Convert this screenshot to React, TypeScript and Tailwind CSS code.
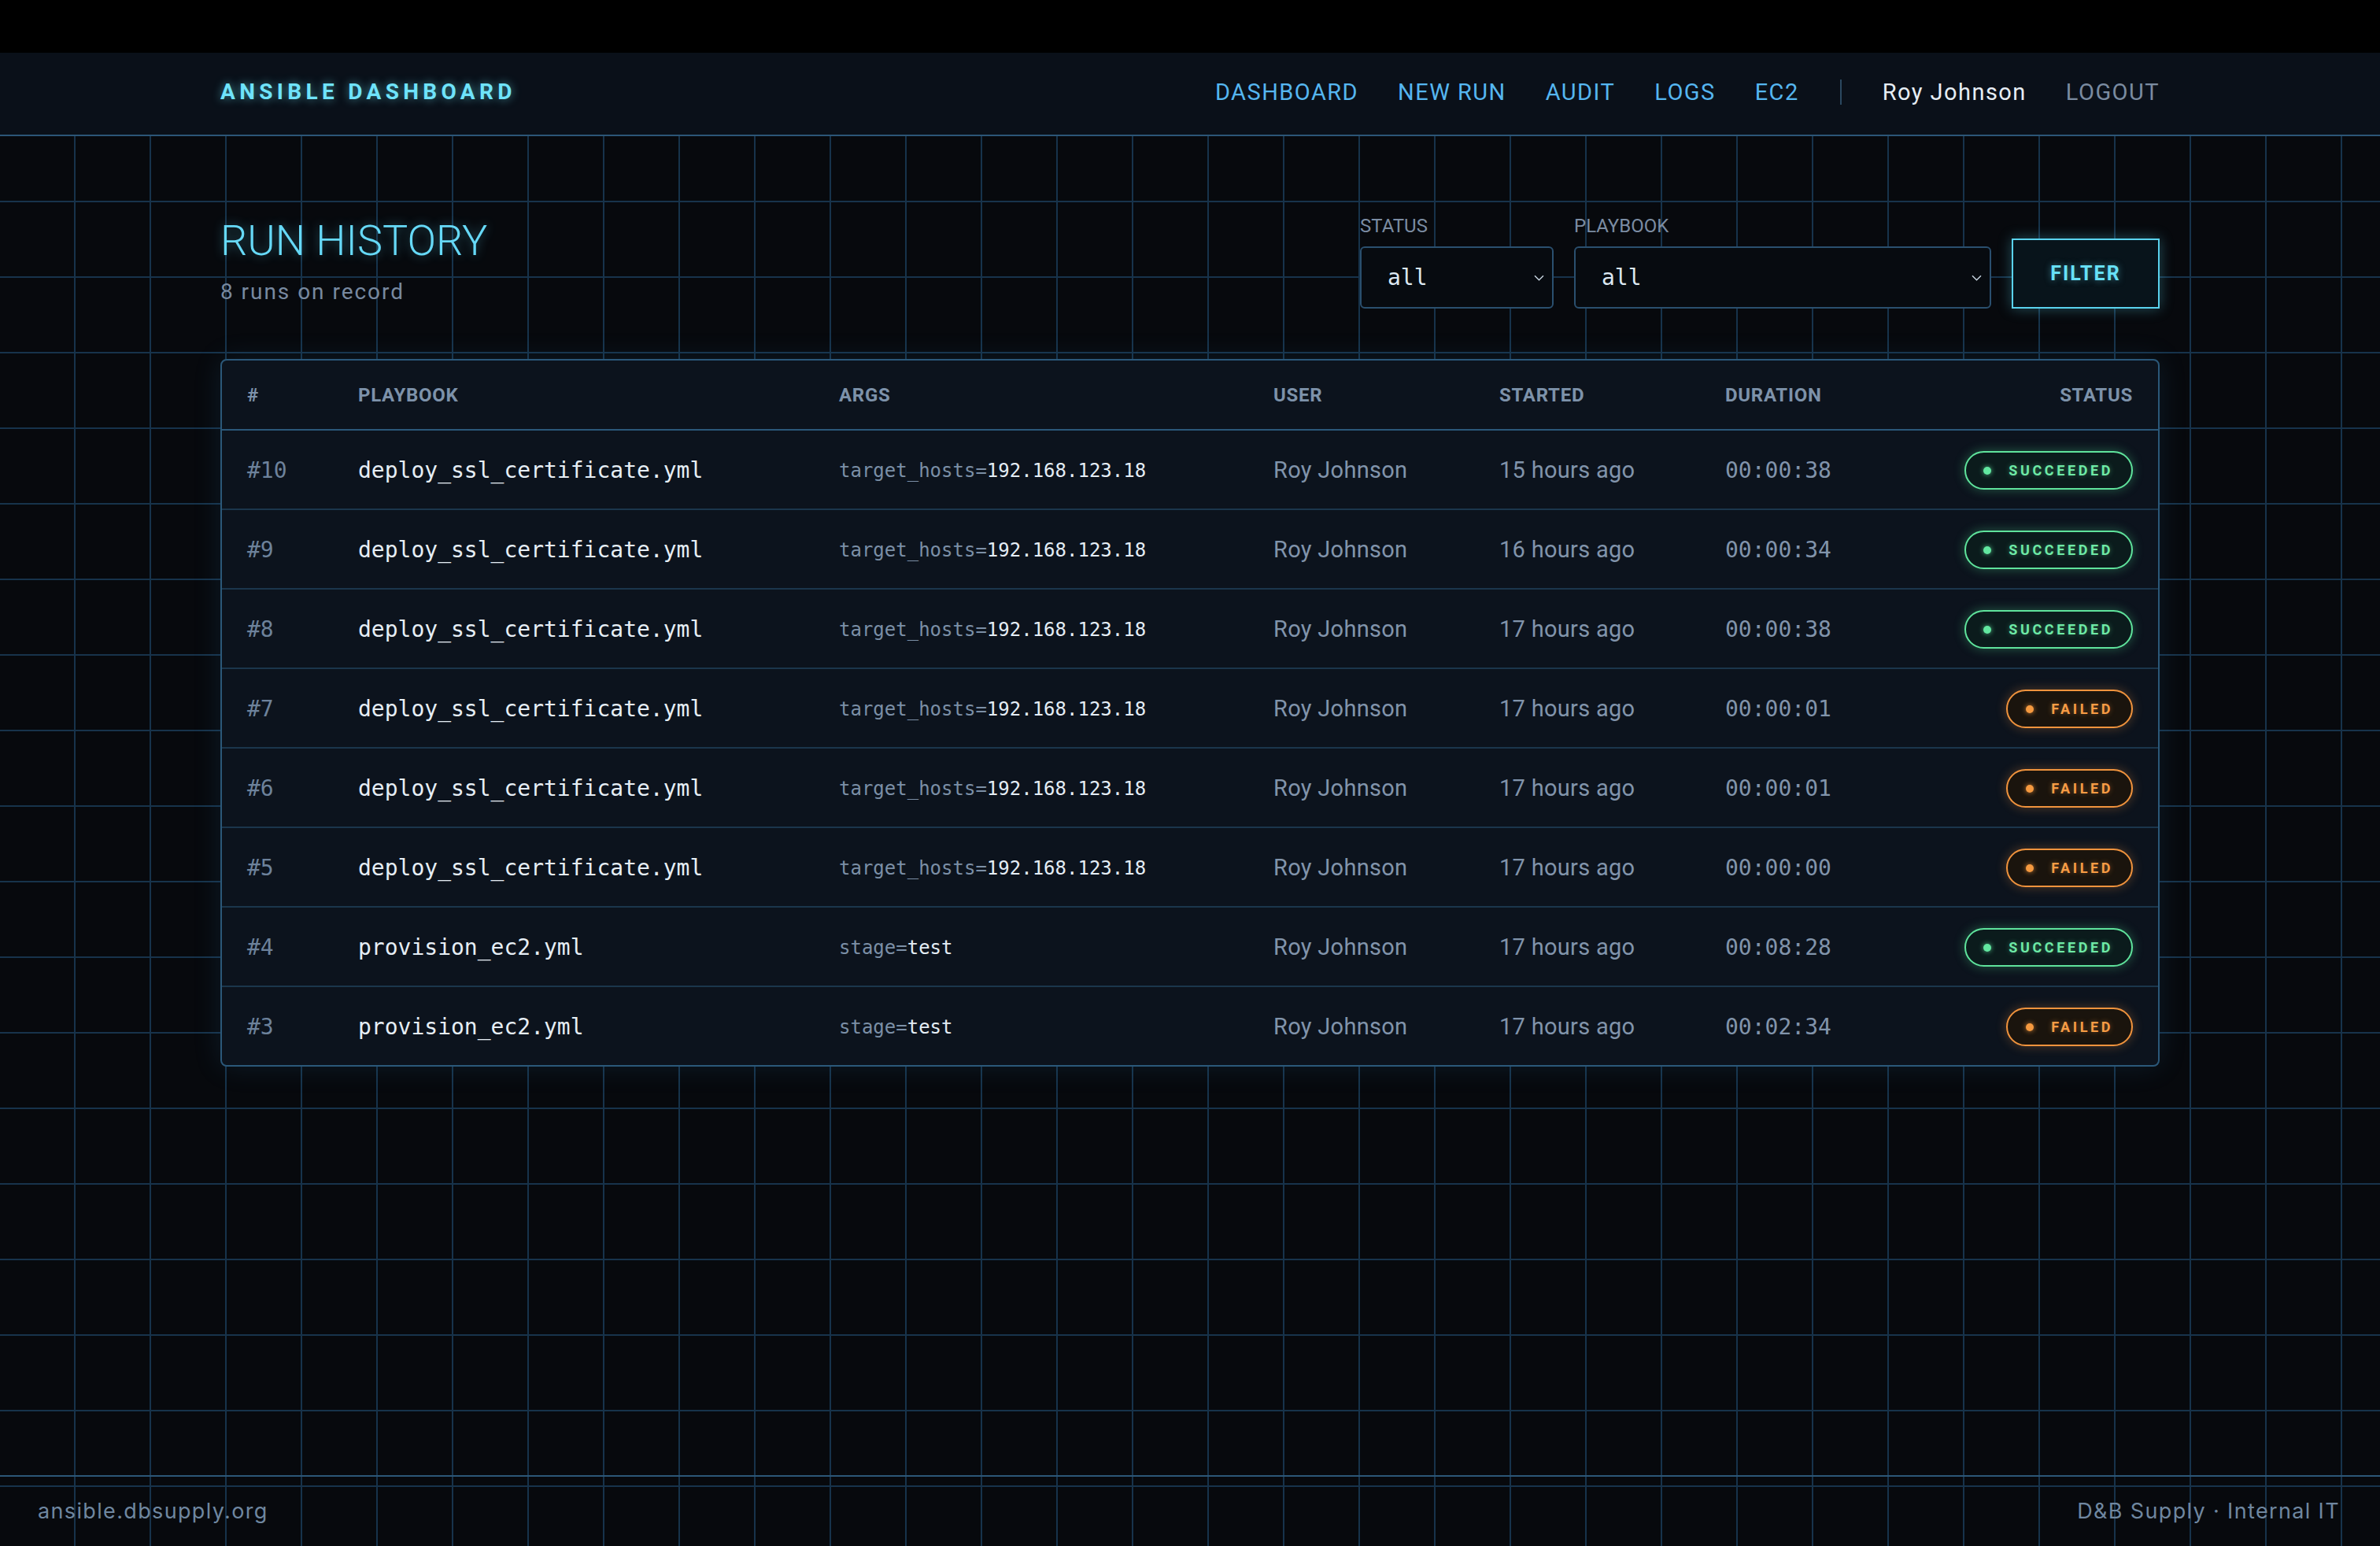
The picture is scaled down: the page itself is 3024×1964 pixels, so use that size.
import React from 'react';

type Run = {
  id: number;
  playbook: string;
  argKey: string;
  argValue: string;
  user: string;
  started: string;
  duration: string;
  status: 'SUCCEEDED' | 'FAILED';
};

const runs: Run[] = [
  { id: 10, playbook: 'deploy_ssl_certificate.yml', argKey: 'target_hosts=', argValue: '192.168.123.18', user: 'Roy Johnson', started: '15 hours ago', duration: '00:00:38', status: 'SUCCEEDED' },
  { id: 9, playbook: 'deploy_ssl_certificate.yml', argKey: 'target_hosts=', argValue: '192.168.123.18', user: 'Roy Johnson', started: '16 hours ago', duration: '00:00:34', status: 'SUCCEEDED' },
  { id: 8, playbook: 'deploy_ssl_certificate.yml', argKey: 'target_hosts=', argValue: '192.168.123.18', user: 'Roy Johnson', started: '17 hours ago', duration: '00:00:38', status: 'SUCCEEDED' },
  { id: 7, playbook: 'deploy_ssl_certificate.yml', argKey: 'target_hosts=', argValue: '192.168.123.18', user: 'Roy Johnson', started: '17 hours ago', duration: '00:00:01', status: 'FAILED' },
  { id: 6, playbook: 'deploy_ssl_certificate.yml', argKey: 'target_hosts=', argValue: '192.168.123.18', user: 'Roy Johnson', started: '17 hours ago', duration: '00:00:01', status: 'FAILED' },
  { id: 5, playbook: 'deploy_ssl_certificate.yml', argKey: 'target_hosts=', argValue: '192.168.123.18', user: 'Roy Johnson', started: '17 hours ago', duration: '00:00:00', status: 'FAILED' },
  { id: 4, playbook: 'provision_ec2.yml', argKey: 'stage=', argValue: 'test', user: 'Roy Johnson', started: '17 hours ago', duration: '00:08:28', status: 'SUCCEEDED' },
  { id: 3, playbook: 'provision_ec2.yml', argKey: 'stage=', argValue: 'test', user: 'Roy Johnson', started: '17 hours ago', duration: '00:02:34', status: 'FAILED' },
];

const navLinks = ['DASHBOARD', 'NEW RUN', 'AUDIT', 'LOGS', 'EC2'];

const cols = 'grid grid-cols-[141px_611px_552px_287px_287px_280px_1fr] items-center px-8';

function Chevron() {
  return (
    <svg width="13" height="8" viewBox="0 0 13 8" fill="none" className="pointer-events-none absolute right-[12px] top-1/2 -translate-y-1/2">
      <polyline points="1,1.2 6.5,6.8 12,1.2" stroke="#c9d6e2" strokeWidth="1.4" />
    </svg>
  );
}

function StatusBadge({ status }: { status: Run['status'] }) {
  if (status === 'SUCCEEDED') {
    return (
      <span className="inline-flex h-[49px] items-center gap-[22px] rounded-full border-2 border-[#5fe39c] bg-[#0b1b1c] pl-[22px] pr-[23px] shadow-[0_0_14px_rgba(80,226,150,0.35)]">
        <span className="h-[10px] w-[10px] rounded-full bg-[#62e7a0] shadow-[0_0_6px_rgba(98,231,160,0.8)]" />
        <span className="font-['Roboto',sans-serif] text-[18px] font-bold leading-none tracking-[0.2em] text-[#6ee9a6] [text-shadow:0_0_6px_rgba(98,231,160,0.45)]">SUCCEEDED</span>
      </span>
    );
  }
  return (
    <span className="inline-flex h-[49px] items-center gap-[22px] rounded-full border-2 border-[#f0933d] bg-[#1a140d] pl-[23px] pr-[23px] shadow-[0_0_14px_rgba(240,147,61,0.32)]">
      <span className="h-[10px] w-[10px] rounded-full bg-[#f5993f] shadow-[0_0_6px_rgba(245,153,63,0.8)]" />
      <span className="font-['Roboto',sans-serif] text-[18px] font-bold leading-none tracking-[0.2em] text-[#f79c45] [text-shadow:0_0_6px_rgba(247,156,69,0.45)]">FAILED</span>
    </span>
  );
}

export default function App() {
  return (
    <div className="flex min-h-screen flex-col bg-[#07090d] [background-image:linear-gradient(to_right,#17334b_2px,transparent_2px),linear-gradient(to_bottom,#17334b_2px,transparent_2px)] [background-size:96px_96px] [background-position:94px_63px] font-['Roboto',sans-serif]">
      <div className="h-[67px] bg-black" />

      <header className="h-[106px] border-b-2 border-[#2c5677] bg-[#0a1019]">
        <div className="mx-auto flex h-full w-[2464px] items-center justify-between pb-[4px]">
          <div className="text-[28px] font-bold leading-none tracking-[0.19em] text-[#6fe3fb] [text-shadow:0_0_12px_rgba(103,232,249,0.6)]">
            ANSIBLE DASHBOARD
          </div>
          <nav className="flex items-center gap-[50px] text-[29px] leading-none tracking-[0.05em]">
            {navLinks.map((link) => (
              <a key={link} href="#" className="text-[#55b6f0]">{link}</a>
            ))}
            <span className="mx-[2px] h-[32px] w-[2px] bg-[#2b4860]" />
            <span className="text-[#e6edf4]">Roy Johnson</span>
            <a href="#" className="text-[#7a8ba0]">LOGOUT</a>
          </nav>
        </div>
      </header>

      <main className="flex-1">
        <div className="mx-auto w-[2464px] pt-[102px]">
          <div className="flex items-start justify-between">
            <div className="mt-[4px]">
              <h1 className="text-[54px] font-light leading-none text-[#66d9f7] [text-shadow:0_0_14px_rgba(94,214,245,0.45)]">RUN HISTORY</h1>
              <p className="mt-[24px] text-[28px] leading-none tracking-[0.07em] text-[#7889a0]">8 runs on record</p>
            </div>

            <div className="flex items-end gap-[26px]">
              <div className="flex flex-col gap-[14px]">
                <label className="text-[24px] leading-none text-[#7b8ca2]">STATUS</label>
                <div className="relative">
                  <select className="h-[79px] w-[246px] appearance-none rounded-[6px] border-2 border-[#2a4f6e] bg-[#070b10] pl-[33px] font-['DejaVu_Sans_Mono',monospace] text-[28px] text-[#dce8f2] outline-none">
                    <option>all</option>
                  </select>
                  <Chevron />
                </div>
              </div>
              <div className="flex flex-col gap-[14px]">
                <label className="text-[24px] leading-none text-[#7b8ca2]">PLAYBOOK</label>
                <div className="relative">
                  <select className="h-[79px] w-[530px] appearance-none rounded-[6px] border-2 border-[#2a4f6e] bg-[#070b10] pl-[33px] font-['DejaVu_Sans_Mono',monospace] text-[28px] text-[#dce8f2] outline-none">
                    <option>all</option>
                  </select>
                  <Chevron />
                </div>
              </div>
              <button className="h-[89px] w-[188px] border-2 border-[#5ad3ee] bg-[#08141b] text-[25px] font-bold leading-none tracking-[0.08em] text-[#67e0f8] shadow-[0_0_16px_rgba(90,211,238,0.35)] [text-shadow:0_0_8px_rgba(103,224,248,0.5)]">
                FILTER
              </button>
            </div>
          </div>

          <div className="mt-[64px] overflow-hidden rounded-[8px] border-2 border-[#2b5879] bg-[#0c131d] shadow-[0_0_36px_rgba(56,140,200,0.14)]">
            <div className={`${cols} h-[89px] border-b-2 border-[#2b5879] text-[24px] font-bold leading-none tracking-[0.03em] text-[#7d92aa]`}>
              <div>#</div>
              <div>PLAYBOOK</div>
              <div>ARGS</div>
              <div>USER</div>
              <div>STARTED</div>
              <div>DURATION</div>
              <div className="text-right">STATUS</div>
            </div>

            {runs.map((run) => (
              <div key={run.id} className={`${cols} h-[101px] border-b-2 border-[#1b364c] pt-[2px] last:h-[99px] last:border-b-0`}>
                <div className="font-['DejaVu_Sans_Mono',monospace] text-[28px] text-[#6d829b]">#{run.id}</div>
                <div className="font-['DejaVu_Sans_Mono',monospace] text-[28px] text-[#e6eef5]">{run.playbook}</div>
                <div className="font-['DejaVu_Sans_Mono',monospace] text-[24px]">
                  <span className="text-[#7b8fa6]">{run.argKey}</span>
                  <span className="text-[#e4edf5]">{run.argValue}</span>
                </div>
                <div className="text-[29px] tracking-[0.01em] text-[#8194ab]">{run.user}</div>
                <div className="text-[29px] tracking-[0.01em] text-[#8194ab]">{run.started}</div>
                <div className="font-['DejaVu_Sans_Mono',monospace] text-[28px] text-[#8194ab]">{run.duration}</div>
                <div className="flex justify-end">
                  <StatusBadge status={run.status} />
                </div>
              </div>
            ))}
          </div>
        </div>
      </main>

      <footer className="flex h-[90px] items-center justify-between border-t-2 border-[#2c5677] pl-[48px] pr-[51px] font-['Inter',sans-serif] text-[27px] tracking-[0.05em] text-[#6f87a0]">
        <span>ansible.dbsupply.org</span>
        <span>D&amp;B Supply · Internal IT</span>
      </footer>
    </div>
  );
}
